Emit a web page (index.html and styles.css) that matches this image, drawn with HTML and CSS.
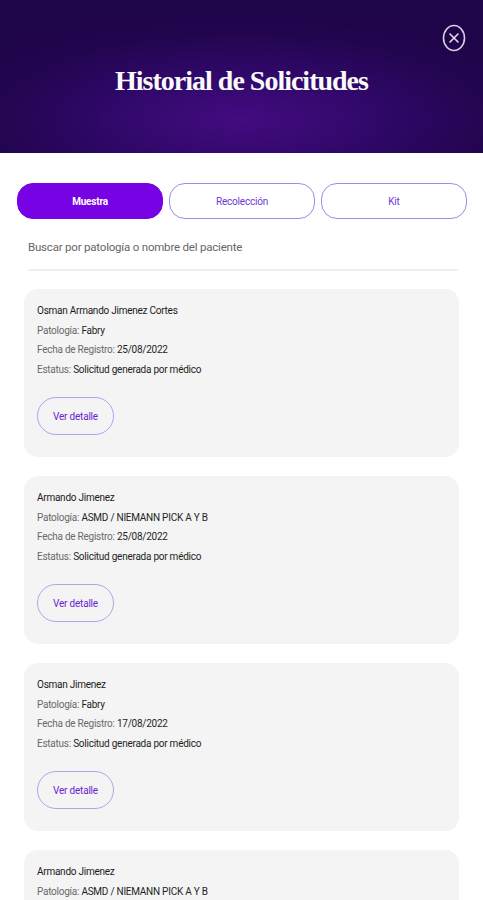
FILE: index.html
```html
<!DOCTYPE html>
<html lang="es">
<head>
  <meta charset="UTF-8" />
  <title>Historial de Solicitudes</title>
  <link rel="stylesheet" href="styles.css">
</head>
<body>
  <header class="hero">
    <h1>Historial de Solicitudes</h1>
    <button class="close" aria-label="Cerrar">
      <svg width="24" height="28" viewBox="0 0 24 28">
        <ellipse cx="12" cy="14" rx="10.5" ry="12.5" fill="none" stroke="#d6cfe6" stroke-width="1.6"/>
        <path d="M8 10 L16 18 M16 10 L8 18" stroke="#e6e0f0" stroke-width="1.6" stroke-linecap="round"/>
      </svg>
    </button>
  </header>

  <main class="content">
    <!-- Tabs -->
    <nav class="tabs">
      <button class="tab active">Muestra</button>
      <button class="tab">Recolección</button>
      <button class="tab">Kit</button>
    </nav>

    <!-- Search -->
    <input class="search" type="text" placeholder="Buscar por patología o nombre del paciente" />

    <!-- Requests -->
    <section class="list">
      <article class="card">
        <p class="name">Osman Armando Jimenez Cortes</p>
        <p><span>Patología:</span> Fabry</p>
        <p><span>Fecha de Registro:</span> 25/08/2022</p>
        <p><span>Estatus:</span> Solicitud generada por médico</p>
        <button class="detail">Ver detalle</button>
      </article>

      <article class="card">
        <p class="name">Armando Jimenez</p>
        <p><span>Patología:</span> ASMD / NIEMANN PICK A Y B</p>
        <p><span>Fecha de Registro:</span> 25/08/2022</p>
        <p><span>Estatus:</span> Solicitud generada por médico</p>
        <button class="detail">Ver detalle</button>
      </article>

      <article class="card">
        <p class="name">Osman Jimenez</p>
        <p><span>Patología:</span> Fabry</p>
        <p><span>Fecha de Registro:</span> 17/08/2022</p>
        <p><span>Estatus:</span> Solicitud generada por médico</p>
        <button class="detail">Ver detalle</button>
      </article>

      <article class="card">
        <p class="name">Armando Jimenez</p>
        <p><span>Patología:</span> ASMD / NIEMANN PICK A Y B</p>
        <p><span>Fecha de Registro:</span> 25/08/2022</p>
        <p><span>Estatus:</span> Solicitud generada por médico</p>
        <button class="detail">Ver detalle</button>
      </article>
    </section>
  </main>
</body>
</html>
```

FILE: styles.css
```css
* {
  box-sizing: border-box;
}

html, body {
  height: 100%;
  overflow: hidden;
}

body {
  margin: 0;
  font-family: 'Roboto', 'Liberation Sans', sans-serif;
  background-color: white;
  color: #222;
}

.hero {
  position: relative;
  height: 153px;
  display: flex;
  justify-content: center;
  align-items: center;
  background: radial-gradient(ellipse 70% 75% at 50% 78%, #430b80 0%, #300869 40%, #22054f 75%, #1e0448 100%);
}

.hero h1 {
  margin: 8px 0 0;
  font-family: 'Liberation Serif', serif;
  font-weight: 700;
  font-size: 28px;
  letter-spacing: -1px;
  color: #fafafa;
}

.close {
  position: absolute;
  top: 24px;
  right: 17px;
  padding: 0;
  border: none;
  background: none;
  cursor: pointer;
  line-height: 0;
}

.content {
  padding: 30px 16px 0 17px;
}

.tabs {
  display: flex;
  gap: 6px;
}

.tab {
  flex: 1;
  height: 36px;
  border: 1px solid #9d8be6;
  border-radius: 16px;
  background-color: white;
  color: #6b37d6;
  font-family: inherit;
  font-size: 10px;
  letter-spacing: -0.2px;
  cursor: pointer;
}

.tab.active {
  background-color: #7702e4;
  border-color: #7702e4;
  color: white;
  font-weight: 700;
}

.search {
  display: block;
  width: 430px;
  margin: 21px 0 0 11px;
  padding: 0 0 15px;
  border: none;
  border-bottom: 2px solid #efefef;
  font-family: inherit;
  font-size: 11.5px;
  letter-spacing: -0.2px;
  color: #555;
  outline: none;
}

.search::placeholder {
  color: #666;
}

.list {
  display: flex;
  flex-direction: column;
  gap: 19px;
  margin: 18px 0 0 7px;
  width: 435px;
}

.card {
  background-color: #f4f4f4;
  border-radius: 14px;
  padding: 12px 13px 22px;
}

.card p {
  margin: 0;
  font-size: 10px;
  line-height: 19.5px;
  letter-spacing: -0.25px;
  color: #1f1f1f;
}

.card p span {
  color: #6a6a6a;
}

.card .name {
  color: #1a1a1a;
}

.detail {
  margin-top: 18px;
  width: 77px;
  height: 38px;
  border: 1px solid #b5a3ea;
  border-radius: 19px;
  background: none;
  color: #6a23d4;
  font-family: inherit;
  font-size: 10px;
  letter-spacing: -0.2px;
  cursor: pointer;
}
```
